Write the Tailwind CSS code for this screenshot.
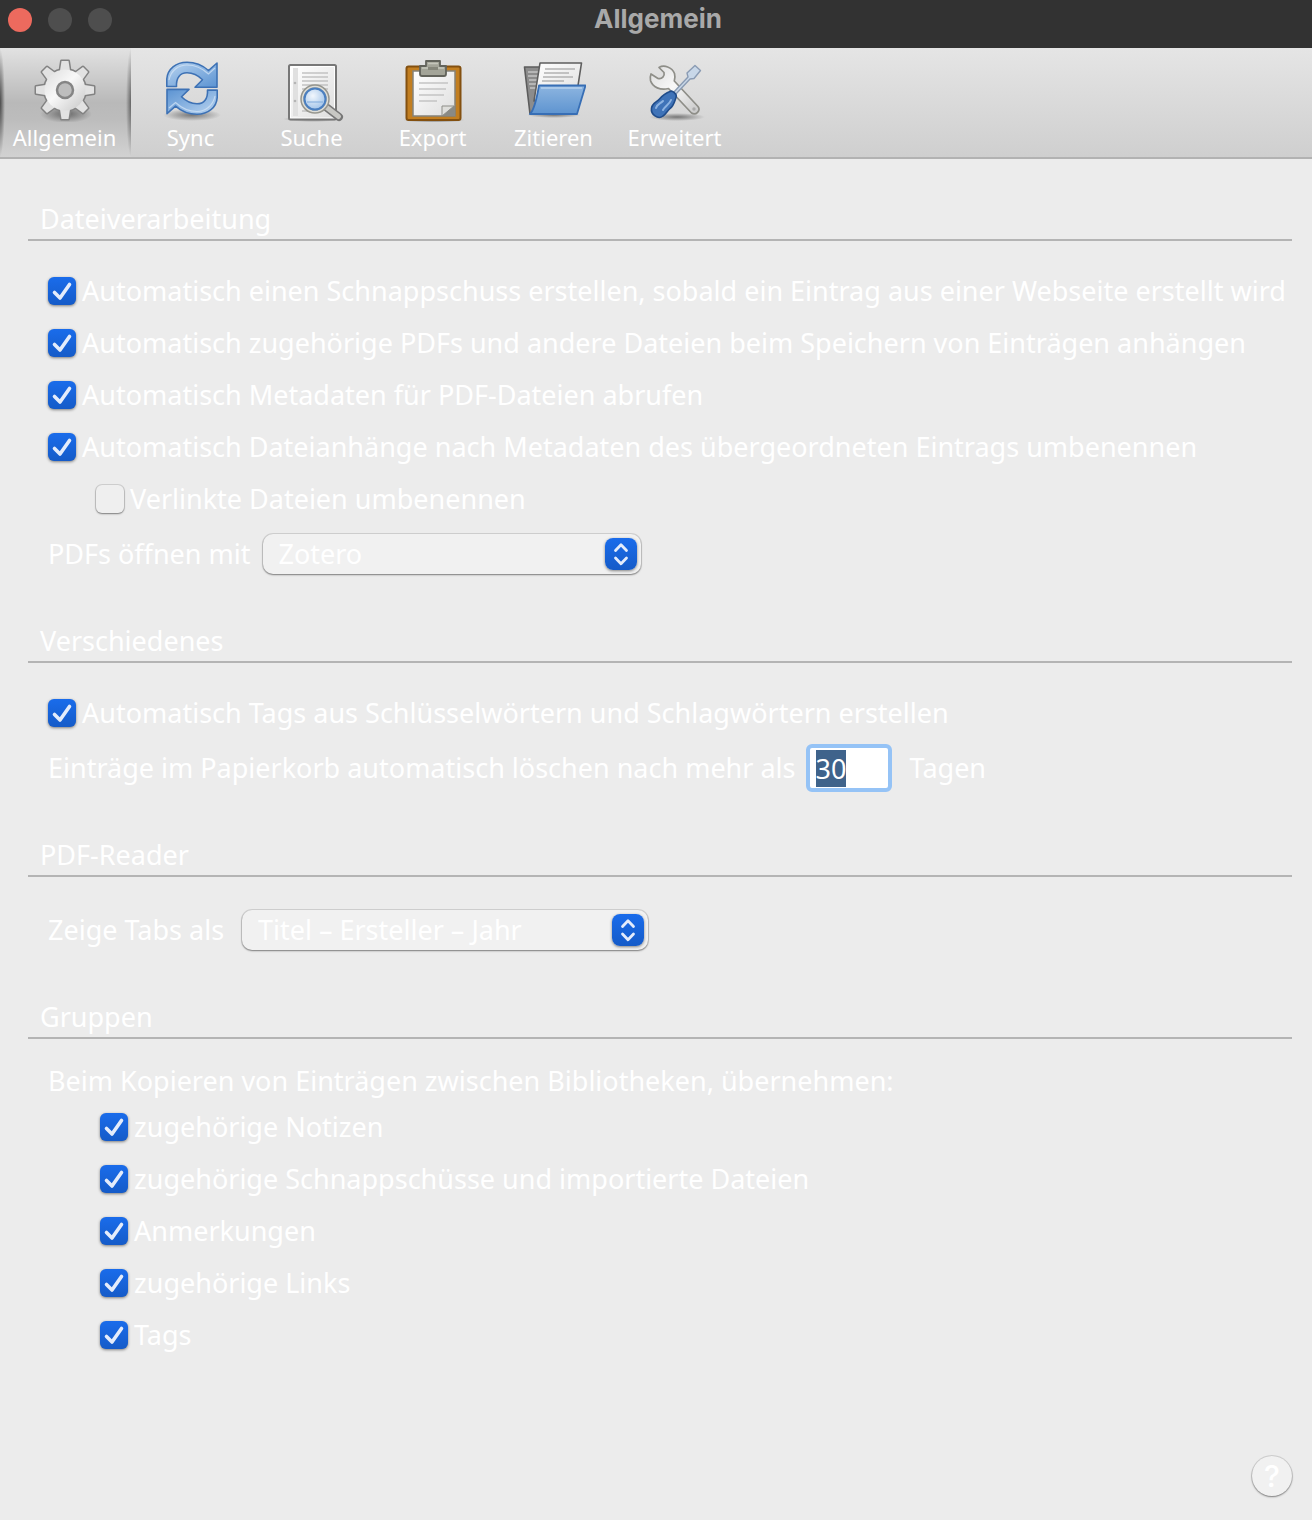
<!DOCTYPE html>
<html lang="de">
<head>
<meta charset="utf-8">
<meta name="viewport" content="width=device-width, initial-scale=1">
<title>Allgemein</title>
<script src="https://cdn.jsdelivr.net/npm/@tailwindcss/browser@4"></script>
</head>
<body class="flex min-h-screen flex-col bg-[#ececec] font-['Noto_Sans',sans-serif] text-[27px] leading-9 text-white">

<svg class="absolute size-0" aria-hidden="true">
  <defs>
    <linearGradient id="metal" x1="0" y1="0" x2="1" y2="1"><stop offset="0" stop-color="#dcdcdc"/><stop offset=".45" stop-color="#f8f8f8"/><stop offset="1" stop-color="#c6c6c6"/></linearGradient>
    <linearGradient id="blue" x1="0" y1="0" x2="1" y2="1"><stop offset="0" stop-color="#b9d4f0"/><stop offset="1" stop-color="#5b93d2"/></linearGradient>
    <linearGradient id="folder" x1="0" y1="0" x2="0" y2="1"><stop offset="0" stop-color="#8db5e0"/><stop offset="1" stop-color="#5e94d0"/></linearGradient>
    <linearGradient id="paper" x1="0" y1="0" x2="1" y2="1"><stop offset="0" stop-color="#ffffff"/><stop offset="1" stop-color="#dedede"/></linearGradient>
    <radialGradient id="shade"><stop offset="0" stop-color="#000" stop-opacity=".45"/><stop offset="1" stop-color="#000" stop-opacity="0"/></radialGradient>
    <radialGradient id="lens" cx=".4" cy=".35" r=".7"><stop offset="0" stop-color="#f2f7fd"/><stop offset="1" stop-color="#9fc2e8"/></radialGradient>
    <symbol id="check" viewBox="0 0 28 28"><path d="M6.500 15.500 12 21 21.500 7.500" fill="none" stroke="#e4ecfb" stroke-width="3.600" stroke-linecap="round" stroke-linejoin="round"/></symbol>
    <symbol id="updown" viewBox="0 0 32 32"><path d="M10.500 12.500 16 6.800l5.500 5.700M10.500 20 16 25.700 21.500 20" fill="none" stroke="#e4ecfb" stroke-width="2.800" stroke-linecap="round" stroke-linejoin="round"/></symbol>
    <g id="teeth"><path id="tooth" d="M26.800 14 28.500 3h7L37.200 14z"/><use href="#tooth" transform="rotate(45 32 32)"/><use href="#tooth" transform="rotate(90 32 32)"/><use href="#tooth" transform="rotate(135 32 32)"/><use href="#tooth" transform="rotate(180 32 32)"/><use href="#tooth" transform="rotate(225 32 32)"/><use href="#tooth" transform="rotate(270 32 32)"/><use href="#tooth" transform="rotate(315 32 32)"/></g>
    <path id="arrow" d="M7.800 28.500V21C8.500 11 17 4.300 28 4.300c9 0 15 2.500 21.500 8.200L58 5v24.200H36l7.500-7.400c-5-5-10-7-15.500-7-7 0-11 5-10.500 13.700z"/>
  </defs>
</svg>

<header class="grid h-12 grid-cols-[1fr_auto_1fr] items-start bg-[#323232] pr-1 pl-2">
  <div class="flex gap-4 pt-2">
    <button type="button" aria-label="Schließen" class="size-6 rounded-full bg-[#ed6a5e]"></button>
    <button type="button" aria-label="Minimieren" class="size-6 rounded-full bg-[#4e4e4e]"></button>
    <button type="button" aria-label="Vergrößern" class="size-6 rounded-full bg-[#4e4e4e]"></button>
  </div>
  <h1 class="font-[Inter,sans-serif] text-[26px] leading-[38px] font-bold text-[#a9a9a9]">Allgemein</h1>
</header>

<nav class="flex h-[111px] border-b-2 border-[#b2b2b2] bg-linear-to-b from-[#e5e5e5] to-[#cfcfcf] text-[22px] leading-[30px] [text-shadow:0_1px_2px_#ffffffaa]">
  <button type="button" class="flex w-[131px] flex-col items-center bg-[radial-gradient(5px_50%_at_left_center,#0009,transparent),radial-gradient(5px_50%_at_right_center,#0007,transparent),linear-gradient(#e2e2e2,#b9b9b9_50%,#bcbcbc_65%,#d2d2d2)] pt-[10px] pr-[2px]">
    <svg class="size-16" viewBox="0 0 64 64"><ellipse cx="33" cy="56" rx="26" ry="9" fill="url(#shade)"/>
      <g fill="#828282" stroke="#828282" stroke-width="3" stroke-linejoin="round"><use href="#teeth"/><circle cx="32" cy="32" r="20.500"/></g>
      <g fill="#e2e2e2"><use href="#teeth"/></g><circle cx="32" cy="32" r="20.500" fill="url(#metal)"/>
      <circle cx="32" cy="32" r="8" fill="#bdbdbd" stroke="#858585" stroke-width="2.500"/></svg>
    <span>Allgemein</span>
  </button>
  <button type="button" class="flex w-[121px] flex-col items-center pt-[10px] pr-[2px]">
    <svg class="size-16" viewBox="0 0 64 64"><ellipse cx="33" cy="57" rx="29" ry="6" fill="url(#shade)"/>
      <g fill="url(#blue)" stroke="#3e72b5" stroke-width="1.600" stroke-linejoin="round"><use href="#arrow"/><use href="#arrow" transform="rotate(180 33 30.300)"/></g>
      <path d="M10 22C12 12 20 7 28 7c9 0 15 3 21.500 9L56 10M56 38c-2 10-10 15.500-18 15.500-9 0-15-3-21.500-9L10 50" fill="none" stroke="#d5e5f6" stroke-width="1.200" opacity=".7"/></svg>
    <span>Sync</span>
  </button>
  <button type="button" class="flex w-[121px] flex-col items-center pt-[10px] pr-[2px]">
    <svg class="size-16" viewBox="0 0 64 64"><ellipse cx="33" cy="61" rx="30" ry="3" fill="url(#shade)"/>
      <rect x="9" y="7" width="47" height="54.500" rx="1.500" fill="#fff" stroke="#777" stroke-width="2"/>
      <rect x="11" y="9" width="43" height="50.500" fill="url(#paper)"/><path d="M13 10h5v48h-5z" fill="#e0e0e0"/>
      <g fill="#b5b5b5"><circle cx="15" cy="25" r="1.300"/><circle cx="15" cy="43" r="1.300"/></g>
      <path d="M22 15h26M22 19h26M22 23h26M22 27h26M22 31h26M22 53h20" stroke="#c2c2c2" stroke-width="1.700"/>
      <path d="m46 49 13 10" stroke="#777" stroke-width="8" stroke-linecap="round"/><path d="m46 49 12.500 9.500" stroke="#c8c8c4" stroke-width="5" stroke-linecap="round"/>
      <circle cx="35" cy="41" r="13" fill="url(#lens)" stroke="#96968f" stroke-width="3.500"/><circle cx="35" cy="41" r="12.500" fill="none" stroke="#deded8" stroke-width="1.500"/>
      <circle cx="35" cy="41" r="10.500" fill="url(#lens)" stroke="#4a7fc0" stroke-width="2"/><path d="M27 44h16" stroke="#7faadb" stroke-width="1"/></svg>
    <span>Suche</span>
  </button>
  <button type="button" class="flex w-[121px] flex-col items-center pt-[10px] pr-[2px]">
    <svg class="size-16" viewBox="0 0 64 64"><ellipse cx="33" cy="62" rx="31" ry="3" fill="url(#shade)"/>
      <rect x="5.500" y="8.500" width="54" height="53.500" rx="2" fill="#c27e20" stroke="#835010" stroke-width="2"/>
      <path d="M12 13h42v45H12z" fill="url(#paper)" stroke="#85837a" stroke-width="1.500"/>
      <path d="M18 25h29M18 31h27M18 37h25M18 43h18" stroke="#c4c4c4" stroke-width="1.700"/>
      <path d="M41 58V48h13v10z" fill="#8a8a85"/><path d="M41 58V48h12z" fill="#dededb" stroke="#8d8d88"/>
      <path d="M25 8V3h14v5h6v8q0 2-2 2H21q-2 0-2-2V8z" fill="#a3a498" stroke="#62635b" stroke-width="1.800" stroke-linejoin="round"/><path d="M21 10h22M27 5.500h10" stroke="#c5c6bb" stroke-width="1.500"/><path d="M27 9h10v3H27z" fill="#85867a"/></svg>
    <span>Export</span>
  </button>
  <button type="button" class="flex w-[121px] flex-col items-center pt-[10px] pr-[2px]">
    <svg class="size-16" viewBox="0 0 64 64"><ellipse cx="32" cy="57" rx="27" ry="3" fill="url(#shade)"/>
      <path d="M2.500 9h19l4 5v42H8z" fill="#8c8c8c" stroke="#5c5c5c" stroke-width="1.600" stroke-linejoin="round"/><path d="M6 14h12M6 18h12M7 22h10M7 26h10M8 30h8" stroke="#c3c3c3" stroke-width="1.300"/>
      <path d="M18 5h41.500L55 34l-43 9z" fill="url(#paper)" stroke="#5e5e5e" stroke-width="1.600" stroke-linejoin="round"/>
      <path d="M23 11h30M22 15h25M21 19h30M20 23h22" stroke="#b2b2b2" stroke-width="1.600"/>
      <path d="M17 27.500h46.500L55 56H8q5-5 9-28.500z" fill="url(#folder)" stroke="#376eb5" stroke-width="1.800" stroke-linejoin="round"/><path d="M19 30h41" stroke="#b6d0ed" stroke-width="1.300"/></svg>
    <span>Zitieren</span>
  </button>
  <button type="button" class="flex w-[121px] flex-col items-center pt-[10px] pr-[2px]">
    <svg class="size-16" viewBox="0 0 64 64"><ellipse cx="34" cy="59" rx="28" ry="4" fill="url(#shade)"/>
      <path d="M16 9.500c5-3 13-.5 15.500 6 .7 2.500.5 5-.2 7.500L55 48.500c3 4-2 9.500-6.500 6.500L25.500 30.500c-8 2-16-1-18-8-.5-2.500-.3-4.500.5-6.500l7 4.500c4 1 7-2.500 6-6z" fill="url(#metal)" stroke="#8e8e88" stroke-width="1.700" stroke-linejoin="round"/><circle cx="51" cy="51" r="1.700" fill="#aaa"/>
      <path d="m30 35 15-16-1-4 8-7.500 5.500 5L51 20.500l-4 .500-15 16z" fill="#c8d7e8" stroke="#8a9bb3" stroke-width="1.400" stroke-linejoin="round"/>
      <path d="M27 33.500c2-1.500 7.500 2.500 6 6-1.500 4-2 8-6 11-3 2.500-4 5.500-7 7.500-5 4-12.500-1.500-11.500-8 .8-5 5-5.500 8-9 3-3.500 6-6 10.500-7.500z" fill="#3f73b8" stroke="#204c8a" stroke-width="1.600"/><path d="M13 50c1-4 4-4 7-7M20 52c2-4 6-5 8-10" stroke="#8db3e2" stroke-width="2" fill="none" stroke-linecap="round"/></svg>
    <span>Erweitert</span>
  </button>
</nav>

<main class="flex flex-1 flex-col gap-10 pt-[42px] pr-5 pb-6 pl-7">
  <section>
    <h2 class="mb-6 h-10 border-b-2 border-[#b4b4b4] pl-3">Dateiverarbeitung</h2>
    <div class="pl-5">
      <label class="flex h-[52px] items-center gap-[6px] whitespace-nowrap"><span class="grid"><input type="checkbox" checked class="peer size-7 appearance-none rounded-md bg-[#efefef] shadow-[0_1px_3px_#0007] checked:bg-linear-to-b checked:from-[#1a6ceb] checked:to-[#155bc8] [grid-area:1/1]"><svg class="pointer-events-none hidden size-7 peer-checked:block [grid-area:1/1]"><use href="#check"/></svg></span>Automatisch einen Schnappschuss erstellen, sobald ein Eintrag aus einer Webseite erstellt wird</label>
      <label class="flex h-[52px] items-center gap-[6px] whitespace-nowrap"><span class="grid"><input type="checkbox" checked class="peer size-7 appearance-none rounded-md bg-[#efefef] shadow-[0_1px_3px_#0007] checked:bg-linear-to-b checked:from-[#1a6ceb] checked:to-[#155bc8] [grid-area:1/1]"><svg class="pointer-events-none hidden size-7 peer-checked:block [grid-area:1/1]"><use href="#check"/></svg></span>Automatisch zugehörige PDFs und andere Dateien beim Speichern von Einträgen anhängen</label>
      <label class="flex h-[52px] items-center gap-[6px] whitespace-nowrap"><span class="grid"><input type="checkbox" checked class="peer size-7 appearance-none rounded-md bg-[#efefef] shadow-[0_1px_3px_#0007] checked:bg-linear-to-b checked:from-[#1a6ceb] checked:to-[#155bc8] [grid-area:1/1]"><svg class="pointer-events-none hidden size-7 peer-checked:block [grid-area:1/1]"><use href="#check"/></svg></span>Automatisch Metadaten für PDF-Dateien abrufen</label>
      <label class="flex h-[52px] items-center gap-[6px] whitespace-nowrap"><span class="grid"><input type="checkbox" checked class="peer size-7 appearance-none rounded-md bg-[#efefef] shadow-[0_1px_3px_#0007] checked:bg-linear-to-b checked:from-[#1a6ceb] checked:to-[#155bc8] [grid-area:1/1]"><svg class="pointer-events-none hidden size-7 peer-checked:block [grid-area:1/1]"><use href="#check"/></svg></span>Automatisch Dateianhänge nach Metadaten des übergeordneten Eintrags umbenennen</label>
      <label class="flex h-[52px] items-center gap-[6px] pl-12 whitespace-nowrap"><span class="grid"><input type="checkbox" class="peer size-7 appearance-none rounded-md bg-[#efefef] shadow-[0_0_0_1px_#0000001c,0_1px_2px_#0006] checked:bg-linear-to-b checked:from-[#1a6ceb] checked:to-[#155bc8] [grid-area:1/1]"><svg class="pointer-events-none hidden size-7 peer-checked:block [grid-area:1/1]"><use href="#check"/></svg></span>Verlinkte Dateien umbenennen</label>
      <div class="flex h-[58px] items-center gap-3">
        <label for="reader">PDFs öffnen mit</label>
        <span class="grid w-[378px] items-center"><select id="reader" class="h-10 w-full appearance-none rounded-[10px] bg-[#f1f1f1] pl-4 shadow-[0_0_0_1px_#0000001c,0_1px_2px_#0006] [grid-area:1/1]"><option>Zotero</option></select><svg class="pointer-events-none mr-1 size-8 justify-self-end rounded-lg bg-linear-to-b from-[#1a6ceb] to-[#155bc8] shadow-[0_1px_3px_#0007] [grid-area:1/1]"><use href="#updown"/></svg></span>
      </div>
    </div>
  </section>

  <section>
    <h2 class="mb-6 h-10 border-b-2 border-[#b4b4b4] pl-3">Verschiedenes</h2>
    <div class="pl-5">
      <label class="flex h-[52px] items-center gap-[6px] whitespace-nowrap"><span class="grid"><input type="checkbox" checked class="peer size-7 appearance-none rounded-md bg-[#efefef] shadow-[0_1px_3px_#0007] checked:bg-linear-to-b checked:from-[#1a6ceb] checked:to-[#155bc8] [grid-area:1/1]"><svg class="pointer-events-none hidden size-7 peer-checked:block [grid-area:1/1]"><use href="#check"/></svg></span>Automatisch Tags aus Schlüsselwörtern und Schlagwörtern erstellen</label>
      <div class="flex h-[58px] items-center gap-[10px]">
        <label for="days">Einträge im Papierkorb automatisch löschen nach mehr als</label>
        <input id="days" type="text" value="30" class="h-12 w-[86px] rounded-md border-4 border-[#95c3f6] bg-white px-[6px] leading-8 text-[#222] outline-none selection:bg-[#3f638b] selection:text-white">
        <span class="pl-2">Tagen</span>
      </div>
    </div>
  </section>

  <section>
    <h2 class="mb-6 h-10 border-b-2 border-[#b4b4b4] pl-3">PDF-Reader</h2>
    <div class="flex h-[58px] items-center gap-3 pl-5">
      <label for="tabs" class="min-w-[182px]">Zeige Tabs als</label>
      <span class="grid w-[406px] items-center"><select id="tabs" class="h-10 w-full appearance-none rounded-[10px] bg-[#f1f1f1] pl-4 shadow-[0_0_0_1px_#0000001c,0_1px_2px_#0006] [grid-area:1/1]"><option>Titel – Ersteller – Jahr</option></select><svg class="pointer-events-none mr-1 size-8 justify-self-end rounded-lg bg-linear-to-b from-[#1a6ceb] to-[#155bc8] shadow-[0_1px_3px_#0007] [grid-area:1/1]"><use href="#updown"/></svg></span>
    </div>
  </section>

  <section>
    <h2 class="mb-6 h-10 border-b-2 border-[#b4b4b4] pl-3">Gruppen</h2>
    <fieldset class="pl-5">
      <legend class="h-[38px]">Beim Kopieren von Einträgen zwischen Bibliotheken, übernehmen:</legend>
      <div class="pl-[52px]">
        <label class="flex h-[52px] items-center gap-[6px] whitespace-nowrap"><span class="grid"><input type="checkbox" checked class="peer size-7 appearance-none rounded-md bg-[#efefef] shadow-[0_1px_3px_#0007] checked:bg-linear-to-b checked:from-[#1a6ceb] checked:to-[#155bc8] [grid-area:1/1]"><svg class="pointer-events-none hidden size-7 peer-checked:block [grid-area:1/1]"><use href="#check"/></svg></span>zugehörige Notizen</label>
        <label class="flex h-[52px] items-center gap-[6px] whitespace-nowrap"><span class="grid"><input type="checkbox" checked class="peer size-7 appearance-none rounded-md bg-[#efefef] shadow-[0_1px_3px_#0007] checked:bg-linear-to-b checked:from-[#1a6ceb] checked:to-[#155bc8] [grid-area:1/1]"><svg class="pointer-events-none hidden size-7 peer-checked:block [grid-area:1/1]"><use href="#check"/></svg></span>zugehörige Schnappschüsse und importierte Dateien</label>
        <label class="flex h-[52px] items-center gap-[6px] whitespace-nowrap"><span class="grid"><input type="checkbox" checked class="peer size-7 appearance-none rounded-md bg-[#efefef] shadow-[0_1px_3px_#0007] checked:bg-linear-to-b checked:from-[#1a6ceb] checked:to-[#155bc8] [grid-area:1/1]"><svg class="pointer-events-none hidden size-7 peer-checked:block [grid-area:1/1]"><use href="#check"/></svg></span>Anmerkungen</label>
        <label class="flex h-[52px] items-center gap-[6px] whitespace-nowrap"><span class="grid"><input type="checkbox" checked class="peer size-7 appearance-none rounded-md bg-[#efefef] shadow-[0_1px_3px_#0007] checked:bg-linear-to-b checked:from-[#1a6ceb] checked:to-[#155bc8] [grid-area:1/1]"><svg class="pointer-events-none hidden size-7 peer-checked:block [grid-area:1/1]"><use href="#check"/></svg></span>zugehörige Links</label>
        <label class="flex h-[52px] items-center gap-[6px] whitespace-nowrap"><span class="grid"><input type="checkbox" checked class="peer size-7 appearance-none rounded-md bg-[#efefef] shadow-[0_1px_3px_#0007] checked:bg-linear-to-b checked:from-[#1a6ceb] checked:to-[#155bc8] [grid-area:1/1]"><svg class="pointer-events-none hidden size-7 peer-checked:block [grid-area:1/1]"><use href="#check"/></svg></span>Tags</label>
      </div>
    </fieldset>
  </section>

  <footer class="mt-auto flex justify-end">
    <button type="button" aria-label="Hilfe" class="grid size-10 place-items-center rounded-full bg-[#f1f1f1] font-[Inter,sans-serif] text-[30px] leading-10 font-medium shadow-[0_0_0_1px_#0000001c,0_1px_2px_#0006]">?</button>
  </footer>
</main>

<script>
  document.getElementById('days').focus();
  document.getElementById('days').select();
</script>
</body>
</html>
